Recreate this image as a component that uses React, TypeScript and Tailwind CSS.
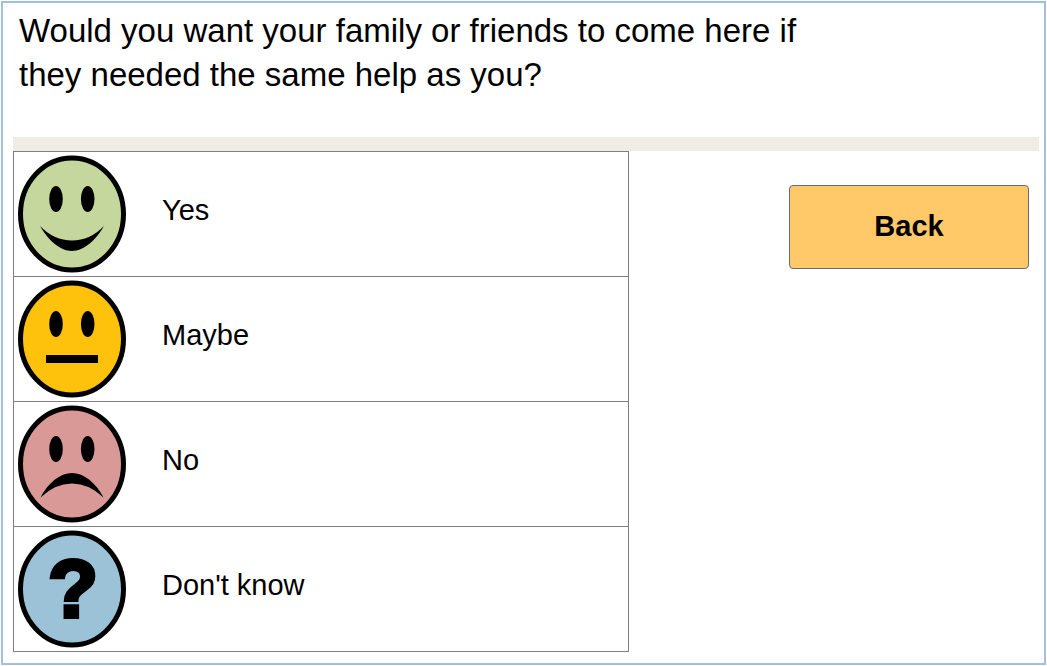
import React, { useState } from "react";

type Mood = "yes" | "maybe" | "no" | "unknown";

const options: { id: Mood; label: string; fill: string }[] = [
  { id: "yes", label: "Yes", fill: "#c5d79d" },
  { id: "maybe", label: "Maybe", fill: "#fec20c" },
  { id: "no", label: "No", fill: "#d99997" },
  { id: "unknown", label: "Don't know", fill: "#9cc2d8" },
];

const Face = ({ mood, fill }: { mood: Mood; fill: string }) => (
  <svg
    viewBox="0 0 108 118"
    className="h-[118px] w-[108px] shrink-0"
    aria-hidden="true"
  >
    <ellipse
      cx="54"
      cy="59"
      rx="51.5"
      ry="56"
      fill={fill}
      stroke="#000"
      strokeWidth="5"
    />
    {mood !== "unknown" && (
      <>
        <ellipse cx="38" cy="44" rx="6.8" ry="13" />
        <ellipse cx="69.7" cy="44" rx="6.8" ry="13" />
      </>
    )}
    {mood === "yes" && (
      <path d="M22 71 Q36 85.5 54 85.5 Q72 85.5 86 71 C78 85 66 96 54 96 C42 96 30 85 22 71 Z" />
    )}
    {mood === "maybe" && <rect x="28" y="75" width="52" height="8" />}
    {mood === "no" && (
      <path d="M22.5 92.5 C30 78 42 68 54 68 C66 68 78 78 85.5 92.5 Q71 78.5 54 78.5 Q37 78.5 22.5 92.5 Z" />
    )}
    {mood === "unknown" && (
      <text
        x="55"
        y="87"
        textAnchor="middle"
        stroke="#000"
        strokeWidth="4"
        className="font-['Liberation_Sans',Arial,sans-serif] text-[82px] font-bold"
      >
        ?
      </text>
    )}
  </svg>
);

const App = () => {
  const [answer, setAnswer] = useState<Mood | null>(null);

  return (
    <main className="m-px border-2 border-[#a3bfdf] bg-white pt-1.5 pr-[5px] pb-[11px] pl-2.5 font-['Liberation_Sans',Arial,sans-serif] text-black">
      <h1 className="min-h-32 max-w-[820px] pl-1.5 text-[33px] leading-[44px]">
        Would you want your family or friends to come here if they needed the
        same help as you?
      </h1>
      <div className="h-3.5 bg-[#f0ebe4]" />
      <div className="flex items-start justify-between">
        <ul className="w-3/5 border border-[#7f7f7f]">
          {options.map((option) => (
            <li
              key={option.id}
              className="border-b border-[#7f7f7f] last:border-b-0"
            >
              <button
                type="button"
                aria-pressed={answer === option.id}
                onClick={() => setAnswer(option.id)}
                className="flex w-full cursor-pointer items-center gap-9 py-[3px] pl-1 text-left"
              >
                <Face mood={option.id} fill={option.fill} />
                <span className="pb-1.5 text-[29px]">{option.label}</span>
              </button>
            </li>
          ))}
        </ul>
        <button
          type="button"
          onClick={() => window.history.back()}
          className="mt-[34px] mr-2.5 h-[84px] w-60 cursor-pointer rounded border border-[#6b6b75] bg-[#ffc869] text-[29px] font-bold"
        >
          Back
        </button>
      </div>
    </main>
  );
};

export default App;
